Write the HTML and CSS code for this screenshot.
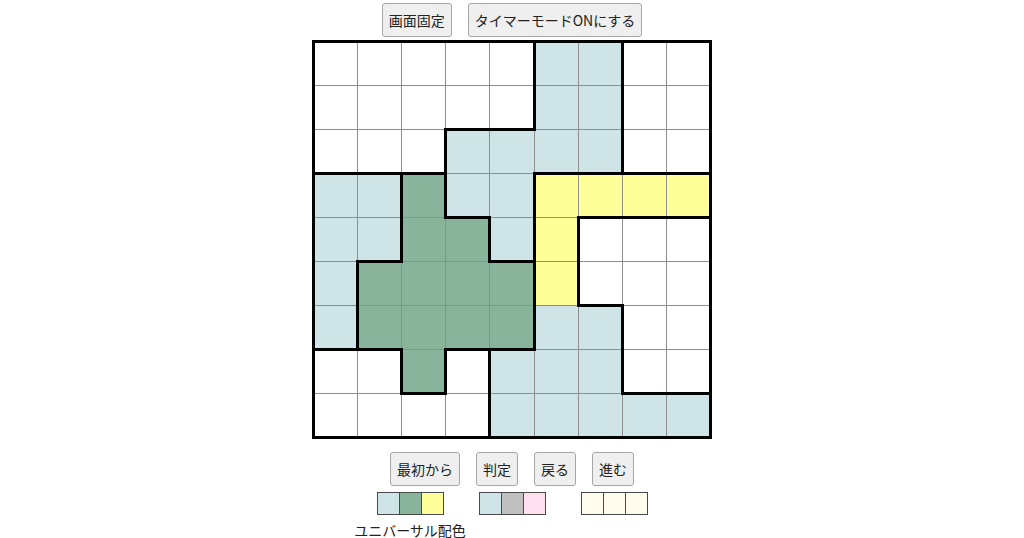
FILE: index.html
```html
<!DOCTYPE html>
<html lang="ja">
<head>
<meta charset="utf-8">
<title>パズル</title>
<link rel="stylesheet" href="styles.css">
</head>
<body>
<div class="app">
  <div class="toolbar top-bar">
    <button class="btn">画面固定</button>
    <button class="btn">タイマーモードONにする</button>
  </div>

  <table class="board">
    <tr>
      <td></td><td></td><td></td><td></td><td class="tr"></td><td class="c-b"></td><td class="c-b tr"></td><td></td><td></td>
    </tr>
    <tr>
      <td></td><td></td><td></td><td class="tb"></td><td class="tr tb"></td><td class="c-b"></td><td class="c-b tr"></td><td></td><td></td>
    </tr>
    <tr>
      <td class="tb"></td><td class="tb"></td><td class="tr tb"></td><td class="c-b"></td><td class="c-b"></td><td class="c-b tb"></td><td class="c-b tr tb"></td><td class="tb"></td><td class="tb"></td>
    </tr>
    <tr>
      <td class="c-b"></td><td class="c-b tr"></td><td class="c-g tr"></td><td class="c-b tb"></td><td class="c-b tr"></td><td class="c-y"></td><td class="c-y tb"></td><td class="c-y tb"></td><td class="c-y tb"></td>
    </tr>
    <tr>
      <td class="c-b"></td><td class="c-b tr tb"></td><td class="c-g"></td><td class="c-g tr"></td><td class="c-b tr tb"></td><td class="c-y tr"></td><td></td><td></td><td></td>
    </tr>
    <tr>
      <td class="c-b tr"></td><td class="c-g"></td><td class="c-g"></td><td class="c-g"></td><td class="c-g tr"></td><td class="c-y tr"></td><td class="tb"></td><td></td><td></td>
    </tr>
    <tr>
      <td class="c-b tr tb"></td><td class="c-g tb"></td><td class="c-g"></td><td class="c-g tb"></td><td class="c-g tr tb"></td><td class="c-b"></td><td class="c-b tr"></td><td></td><td></td>
    </tr>
    <tr>
      <td></td><td class="tr"></td><td class="c-g tr tb"></td><td class="tr"></td><td class="c-b"></td><td class="c-b"></td><td class="c-b tr"></td><td class="tb"></td><td class="tb"></td>
    </tr>
    <tr>
      <td></td><td></td><td></td><td class="tr"></td><td class="c-b"></td><td class="c-b"></td><td class="c-b"></td><td class="c-b"></td><td class="c-b"></td>
    </tr>
  </table>

  <div class="toolbar controls">
    <button class="btn">最初から</button>
    <button class="btn">判定</button>
    <button class="btn">戻る</button>
    <button class="btn">進む</button>
  </div>

  <div class="palettes">
    <div class="palette">
      <div class="swatches">
        <span class="swatch s-blue"></span><span class="swatch s-green"></span><span class="swatch s-yellow"></span>
      </div>
      <div class="palette-label">ユニバーサル配色</div>
    </div>
    <div class="palette">
      <div class="swatches">
        <span class="swatch s-blue"></span><span class="swatch s-gray"></span><span class="swatch s-pink"></span>
      </div>
    </div>
    <div class="palette">
      <div class="swatches">
        <span class="swatch s-cream"></span><span class="swatch s-cream"></span><span class="swatch s-cream"></span>
      </div>
    </div>
  </div>
</div>
</body>
</html>
```

FILE: styles.css
```css
html, body {
  margin: 0;
  padding: 0;
  background: #ffffff;
}

body {
  font-family: "Noto Sans CJK JP", "Noto Sans", sans-serif;
  color: #222;
}

.app {
  display: flex;
  flex-direction: column;
  align-items: center;
}

.toolbar {
  display: flex;
  gap: 16px;
}

.top-bar {
  margin-top: 3px;
}

.controls {
  margin-top: 13px;
}

.btn {
  height: 34px;
  padding: 0 6px;
  font-family: "Noto Sans CJK JP", "Noto Sans", sans-serif;
  font-size: 14px;
  line-height: 20px;
  color: #222;
  background: #efefef;
  border: 1px solid #a6a6a6;
  border-radius: 3px;
}

.board {
  margin-top: 3px;
  width: 400px;
  table-layout: fixed;
  border-collapse: collapse;
  border: 3px solid #000;
}

.board tr {
  height: 44px;
}

.board td {
  padding: 0;
  border: 1px solid #8e8e8e;
  background: #ffffff;
}

.board td.c-b { background: #cee4e6; }
.board td.c-g { background: #88b49c; }
.board td.c-y { background: #ffff99; }

.board td.tr { border-right: 3px solid #000; }
.board td.tb { border-bottom: 3px solid #000; }

.palettes {
  display: flex;
  gap: 35px;
  margin-top: 6px;
}

.palette {
  width: 67px;
  display: flex;
  flex-direction: column;
  align-items: center;
}

.swatches {
  display: flex;
}

.swatch {
  width: 23px;
  height: 23px;
  box-sizing: border-box;
  border: 1px solid #4a4a4a;
}

.swatch + .swatch {
  margin-left: -1px;
}

.s-blue { background: #cee4e6; }
.s-green { background: #88b49c; }
.s-yellow { background: #ffff99; }
.s-gray { background: #c0c0c0; }
.s-pink { background: #ffe0f0; }
.s-cream { background: #fffcee; }

.palette-label {
  margin-top: 5px;
  font-size: 14px;
  line-height: 20px;
  white-space: nowrap;
  color: #222;
}
```
